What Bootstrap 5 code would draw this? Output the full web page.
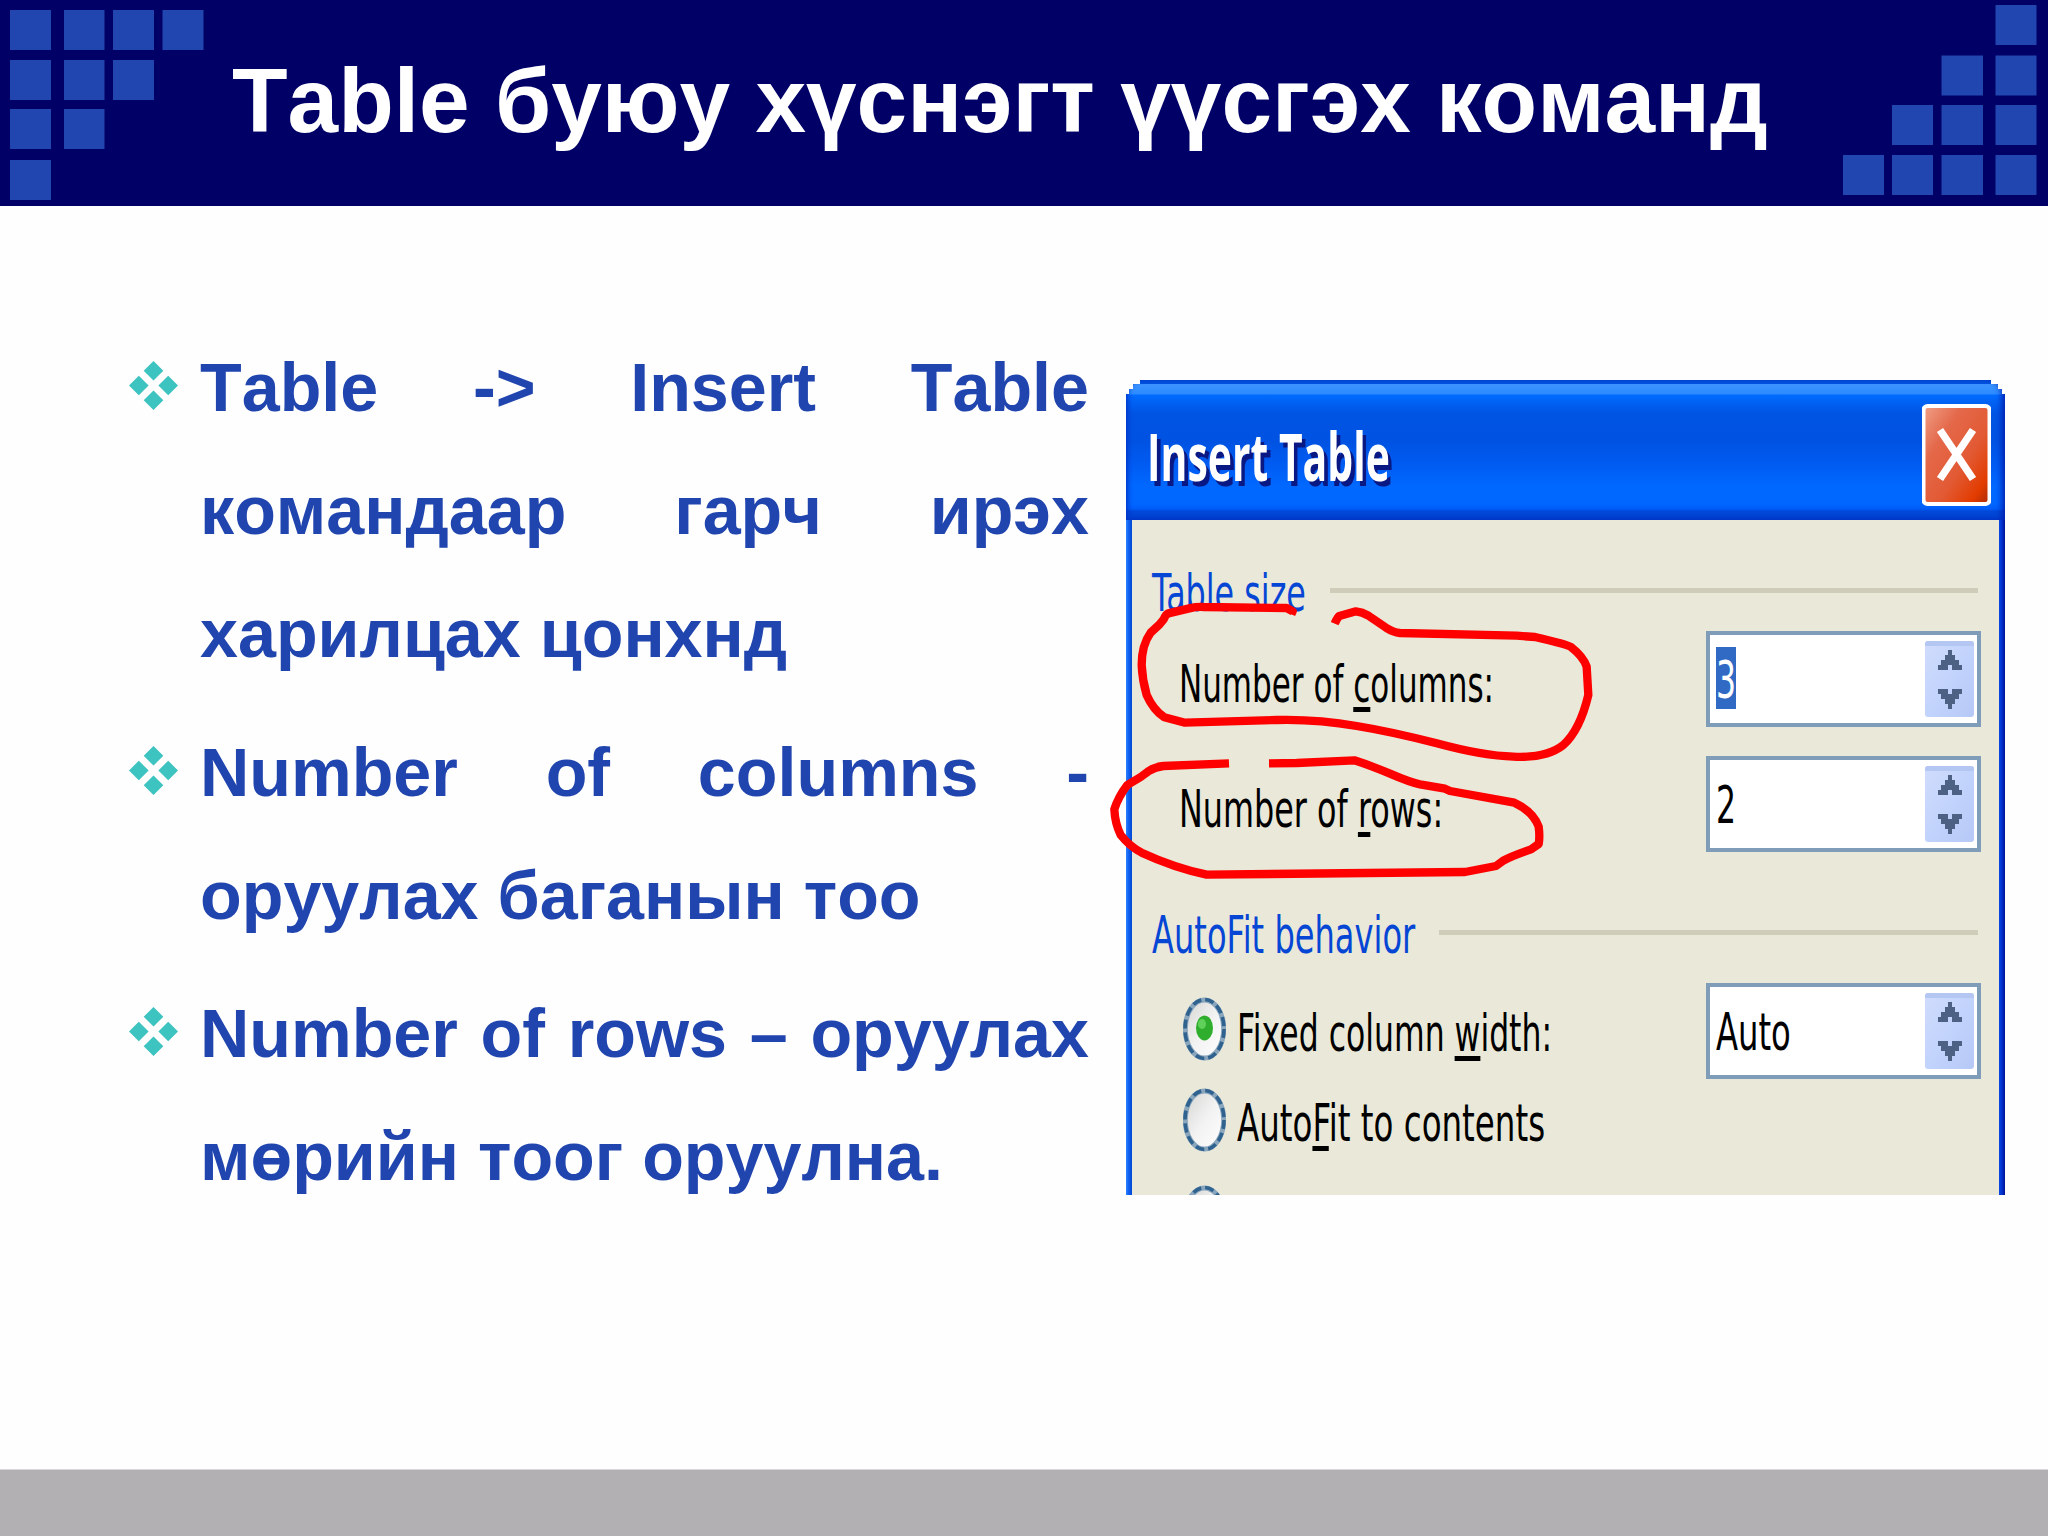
<!DOCTYPE html>
<html lang="mn">
<head>
<meta charset="utf-8">
<title>Table буюу хүснэгт үүсгэх команд</title>
<link href="https://cdn.jsdelivr.net/npm/bootstrap@5.3.0/dist/css/bootstrap.min.css" rel="stylesheet">
<style>
  body { width: 2048px; height: 1536px; background: #fefefe; font-family: "Liberation Sans", Arial, sans-serif; overflow: hidden; }
  .slide-head { height: 206px; background: #000066; }
  .slide-head h1 { font-size: 91px; line-height: 110px; color: #fff; padding: 0 0 4px 28px; font-kerning: none; }
  .slide-foot { height: 67px; background: #b2b0b3; border-top: 1px solid #d9d8d9; }
  .tile { fill: #2146b0; }

  .points { width: 961px; margin: 120px 0 0 128px; font-size: 68.27px; line-height: 122.88px; color: #2145ae; gap: 16px; font-kerning: none; }
  .points p { text-align: justify; width: 889px; }
  .points svg { margin: 35px 0 0 1px; }

  .dlg { width: 879px; height: 815px; margin: 174px 0 0 37px; }
  .dlg-bar { height: 140px; padding: 7px 14px 0 21px; border-radius: 14px 14px 0 0;
    box-shadow: inset 4px 0 5px -2px #0036c8, inset -5px 0 6px -2px #0020b0;
    background: linear-gradient(#0054e0 0 4px, #3e95ff 4px, #2c8bff 14px, #006cff 15px, #0062f4 22px, #0054e3 34px, #0053e2 62px, #005bf2 84px, #0068ff 106px, #0066ff 124px, #005cf8 129px, #0049d8 131px, #0040d0 140px);
    clip-path: polygon(0 14px, 3px 14px, 3px 9px, 7px 9px, 7px 4px, 14px 4px, 14px 0, 865px 0, 865px 4px, 872px 4px, 872px 9px, 876px 9px, 876px 14px, 879px 14px, 879px 140px, 0 140px); }
  .dlg-title { font: 700 67px/90px "Open Sans", sans-serif; color: #fff; text-shadow: 6px 5px 0 #0a1883; padding-top: 3px; }
  .dlg-close { width: 69px; height: 102px; margin-top: 2px; }
  .dlg-body { height: 675px; background: #eae9d9; padding: 35px 18px 0 20px; border: solid; border-width: 0 6px;
    border-image: linear-gradient(90deg, #2f80ff 0, #0b5cf0 3px, #0348d0 6px, #0a48e0 calc(100% - 6px), #0030d0 calc(100% - 3px), #001490 100%) 0 6 0 6; overflow: hidden; }
  .fit { display: inline-block; white-space: nowrap; transform-origin: 0 50%; }
  .fitbox { flex: none; }
  .ui { font-family: "DejaVu Sans", sans-serif; font-size: 52px; line-height: 64px; color: #000; }
  .ui u { text-decoration-thickness: 5px; text-underline-offset: 5px; text-decoration-skip-ink: none; }
  .legend-row { height: 70px; gap: 24px; color: #0646d5; }
  .legend-row hr { height: 5px; background: #cfcdba; border: 0; opacity: 1; margin: 0 3px 0 0; }
  .legend-row .fitbox { padding-top: 6px; }
  .field-row { height: 96px; padding-left: 27px; }
  .spin { width: 275px; height: 96px; background: #fff; border: solid #7f9db9; border-width: 4.5px 4px; padding: 0 3px 0 6px; }
  .picked { background: #316ac5; color: #fff; height: 62px; line-height: 66px; width: 20px; margin-bottom: 2px; }
  .radio-row { gap: 11px; padding-left: 31px; }
  .ink { left: -26px; top: 210px; }
</style>
</head>
<body class="d-flex flex-column">
<svg width="0" height="0" class="position-absolute">
  <defs>
    <linearGradient id="redBtn" x1="0" y1="0" x2="1" y2="1">
      <stop offset="0" stop-color="#f0a088"/><stop offset=".3" stop-color="#e4684a"/><stop offset=".6" stop-color="#e25a34"/><stop offset=".85" stop-color="#e23c00"/><stop offset="1" stop-color="#a82a08"/>
    </linearGradient>
    <linearGradient id="spinFill" x1="0" y1="0" x2="1" y2="1">
      <stop offset="0" stop-color="#d0dcfc"/><stop offset=".5" stop-color="#c2d3fc"/><stop offset="1" stop-color="#b6c8f6"/>
    </linearGradient>
    <linearGradient id="radioFill" x1="0" y1="0" x2="1" y2="1">
      <stop offset="0" stop-color="#d4d4d2"/><stop offset=".5" stop-color="#f2f2f2"/><stop offset="1" stop-color="#ffffff"/>
    </linearGradient>
    <symbol id="spinner" viewBox="0 0 49 76">
      <rect width="49" height="76" rx="3" fill="url(#spinFill)"/>
      <path d="M0 3a3 3 0 0 1 3-3h43a3 3 0 0 1 3 3v2H0z" fill="#b4c6f2"/>
      <path fill="#4d6185" d="M23 9h4v5h3v5h4v5h3v5h-10v-5h-4v5H13v-5h3v-5h4v-5h3zM13 48h10v5h4v-5h10v5h-3v5h-4v5h-3v5h-4v-5h-3v-5h-4v-5h-3z"/>
    </symbol>
    <symbol id="radio" viewBox="0 0 43 64">
      <ellipse cx="21.5" cy="32" rx="19.2" ry="29" fill="url(#radioFill)" stroke="#8aa6bd" stroke-width="5"/>
      <ellipse cx="21.5" cy="32" rx="19.5" ry="29.5" fill="none" stroke="#2f628e" stroke-width="3.6" stroke-dasharray="9 4"/>
    </symbol>
    <symbol id="bullet" viewBox="0 0 49 49">
      <path fill="#3dc3c0" d="M24.500 0l9.800 9.800-9.800 9.800-9.800-9.800zM24.500 29.400l9.800 9.800-9.800 9.800-9.800-9.800zM9.800 14.700l9.800 9.800-9.800 9.800-9.800-9.800zM39.200 14.700l9.800 9.800-9.800 9.800-9.800-9.800z"/>
    </symbol>
  </defs>
</svg>

<header class="slide-head d-flex align-items-center flex-shrink-0">
  <svg width="204" height="206" class="flex-shrink-0">
    <g class="tile">
      <rect x="10" y="10" width="41" height="40"/><rect x="64" y="10" width="40.500" height="40"/><rect x="113" y="10" width="41" height="40"/><rect x="162.500" y="10" width="41" height="40"/>
      <rect x="10" y="60" width="41" height="40"/><rect x="64" y="60" width="40.500" height="40"/><rect x="113" y="60" width="41" height="40"/>
      <rect x="10" y="109" width="41" height="40"/><rect x="64" y="109" width="40.500" height="40"/>
      <rect x="10" y="160" width="41" height="40"/>
    </g>
  </svg>
  <h1 class="fw-bold mb-0 flex-grow-1 text-nowrap">Table буюу хүснэгт үүсгэх команд</h1>
  <svg width="205" height="206" class="flex-shrink-0">
    <g class="tile">
      <rect x="152.500" y="5" width="41" height="40"/>
      <rect x="98.500" y="55.500" width="41.500" height="40"/><rect x="152.500" y="55.500" width="41" height="40"/>
      <rect x="49" y="105" width="41" height="40"/><rect x="98.500" y="105" width="41.500" height="40"/><rect x="152.500" y="105" width="41" height="40"/>
      <rect x="0" y="155" width="41" height="40"/><rect x="49" y="155" width="41" height="40"/><rect x="98.500" y="155" width="41.500" height="40"/><rect x="152.500" y="155" width="41" height="40"/>
    </g>
  </svg>
</header>

<main class="d-flex flex-grow-1 align-items-start">
  <ul class="points list-unstyled d-flex flex-column fw-bold flex-shrink-0">
    <li class="d-flex justify-content-between"><svg width="49" height="49"><use href="#bullet"/></svg><p class="mb-0">Table -&gt; Insert Table командаар гарч ирэх харилцах цонхнд</p></li>
    <li class="d-flex justify-content-between"><svg width="49" height="49"><use href="#bullet"/></svg><p class="mb-0">Number of columns - оруулах баганын тоо</p></li>
    <li class="d-flex justify-content-between"><svg width="49" height="49"><use href="#bullet"/></svg><p class="mb-0">Number of rows – оруулах мөрийн тоог оруулна.</p></li>
  </ul>

  <section class="dlg position-relative flex-shrink-0">
    <div class="dlg-bar d-flex align-items-center justify-content-between">
      <div class="fitbox dlg-title" data-w="243"><span class="fit">Insert Table</span></div>
      <svg class="dlg-close" viewBox="0 0 69 102">
        <rect x="1.500" y="2" width="66" height="98" rx="4" fill="url(#redBtn)" stroke="#fff" stroke-width="4"/>
        <path d="M18 26L51 75M51 26L18 75" stroke="#fff" stroke-width="7.500"/>
      </svg>
    </div>
    <div class="dlg-body ui">
      <div class="legend-row d-flex align-items-center">
        <div class="fitbox" data-w="154"><span class="fit">Table size</span></div><hr class="flex-grow-1">
      </div>
      <div class="field-row d-flex align-items-center justify-content-between" style="margin-top:6px">
        <div class="fitbox" data-w="315" style="padding-top:10px"><span class="fit">Number of <u>c</u>olumns:</span></div>
        <div class="spin d-flex align-items-center justify-content-between"><div class="fitbox picked" data-w="20"><span class="fit">3</span></div><svg width="49" height="76"><use href="#spinner"/></svg></div>
      </div>
      <div class="field-row d-flex align-items-center justify-content-between" style="margin-top:29px">
        <div class="fitbox" data-w="264" style="padding-top:10px"><span class="fit">Number of <u>r</u>ows:</span></div>
        <div class="spin d-flex align-items-center justify-content-between"><div class="fitbox" data-w="20" style="padding-top:2px"><span class="fit">2</span></div><svg width="49" height="76"><use href="#spinner"/></svg></div>
      </div>
      <div class="legend-row d-flex align-items-center" style="margin-top:45px">
        <div class="fitbox" data-w="263"><span class="fit">AutoFit behavior</span></div><hr class="flex-grow-1">
      </div>
      <div class="d-flex align-items-center justify-content-between" style="margin-top:16px">
        <div class="radio-row d-flex align-items-center" style="padding-bottom:4px">
          <svg width="43" height="64"><use href="#radio"/><ellipse cx="21.500" cy="31" rx="8.500" ry="12.500" fill="#2eae2c"/><ellipse cx="19" cy="27" rx="4" ry="5" fill="#5fd05a"/></svg>
          <div class="fitbox" data-w="315" style="padding-top:7px"><span class="fit">Fixed column <u>w</u>idth:</span></div>
        </div>
        <div class="spin d-flex align-items-center justify-content-between"><div class="fitbox" data-w="75" style="padding-top:2px"><span class="fit">Auto</span></div><svg width="49" height="76"><use href="#spinner"/></svg></div>
      </div>
      <div class="radio-row d-flex" style="margin-top:9px">
        <svg width="43" height="64"><use href="#radio"/></svg>
        <div class="fitbox" data-w="308" style="padding-top:3px"><span class="fit">Auto<u>F</u>it to contents</span></div>
      </div>
      <div class="radio-row d-flex" style="margin-top:30px">
        <svg width="43" height="64"><use href="#radio"/></svg>
      </div>
    </div>
    <svg class="ink position-absolute" width="520" height="310" viewBox="0 0 1560 930" fill="none" stroke="#ff0000" stroke-width="25" stroke-linejoin="round">
      <path d="M574 73L578 64L560 54L310 51Q290 50 268 55L205 70Q197 74 191 88L178 104L152 128Q125 165 125 225Q127 270 140 315Q160 360 193 382L255 398L530 390Q650 387 770 408Q880 426 1010 460Q1150 498 1240 500Q1340 505 1390 465Q1440 420 1465 315L1460 230Q1450 200 1413 171Q1400 163 1305 141L1250 137L900 129Q880 127 858 113L805 77Q787 66 768 64L718 78Q711 84 704 101"/>
      <path d="M387 520L190 528Q165 531 148 542L122 561L82 585Q55 620 43 658Q45 700 62 735Q90 770 125 788Q220 832 320 854L1095 846L1188 828L1210 812Q1230 800 1293 778L1316 762Q1320 740 1316 710Q1300 665 1243 638L1050 603L1035 596L960 583Q930 577 870 551Q810 526 763 511L590 519L507 520"/>
    </svg>
  </section>
</main>

<footer class="slide-foot flex-shrink-0"></footer>

<script src="https://cdn.jsdelivr.net/npm/bootstrap@5.3.0/dist/js/bootstrap.bundle.min.js"></script>
<script>
  // Condense every dialog caption to the advance width of its box
  document.querySelectorAll('.fitbox').forEach(function (box) {
    var text = box.firstElementChild;
    var natural = text.offsetWidth;
    box.style.width = box.dataset.w + 'px';
    text.style.transform = 'scaleX(' + box.dataset.w / natural + ')';
  });
</script>
</body>
</html>
